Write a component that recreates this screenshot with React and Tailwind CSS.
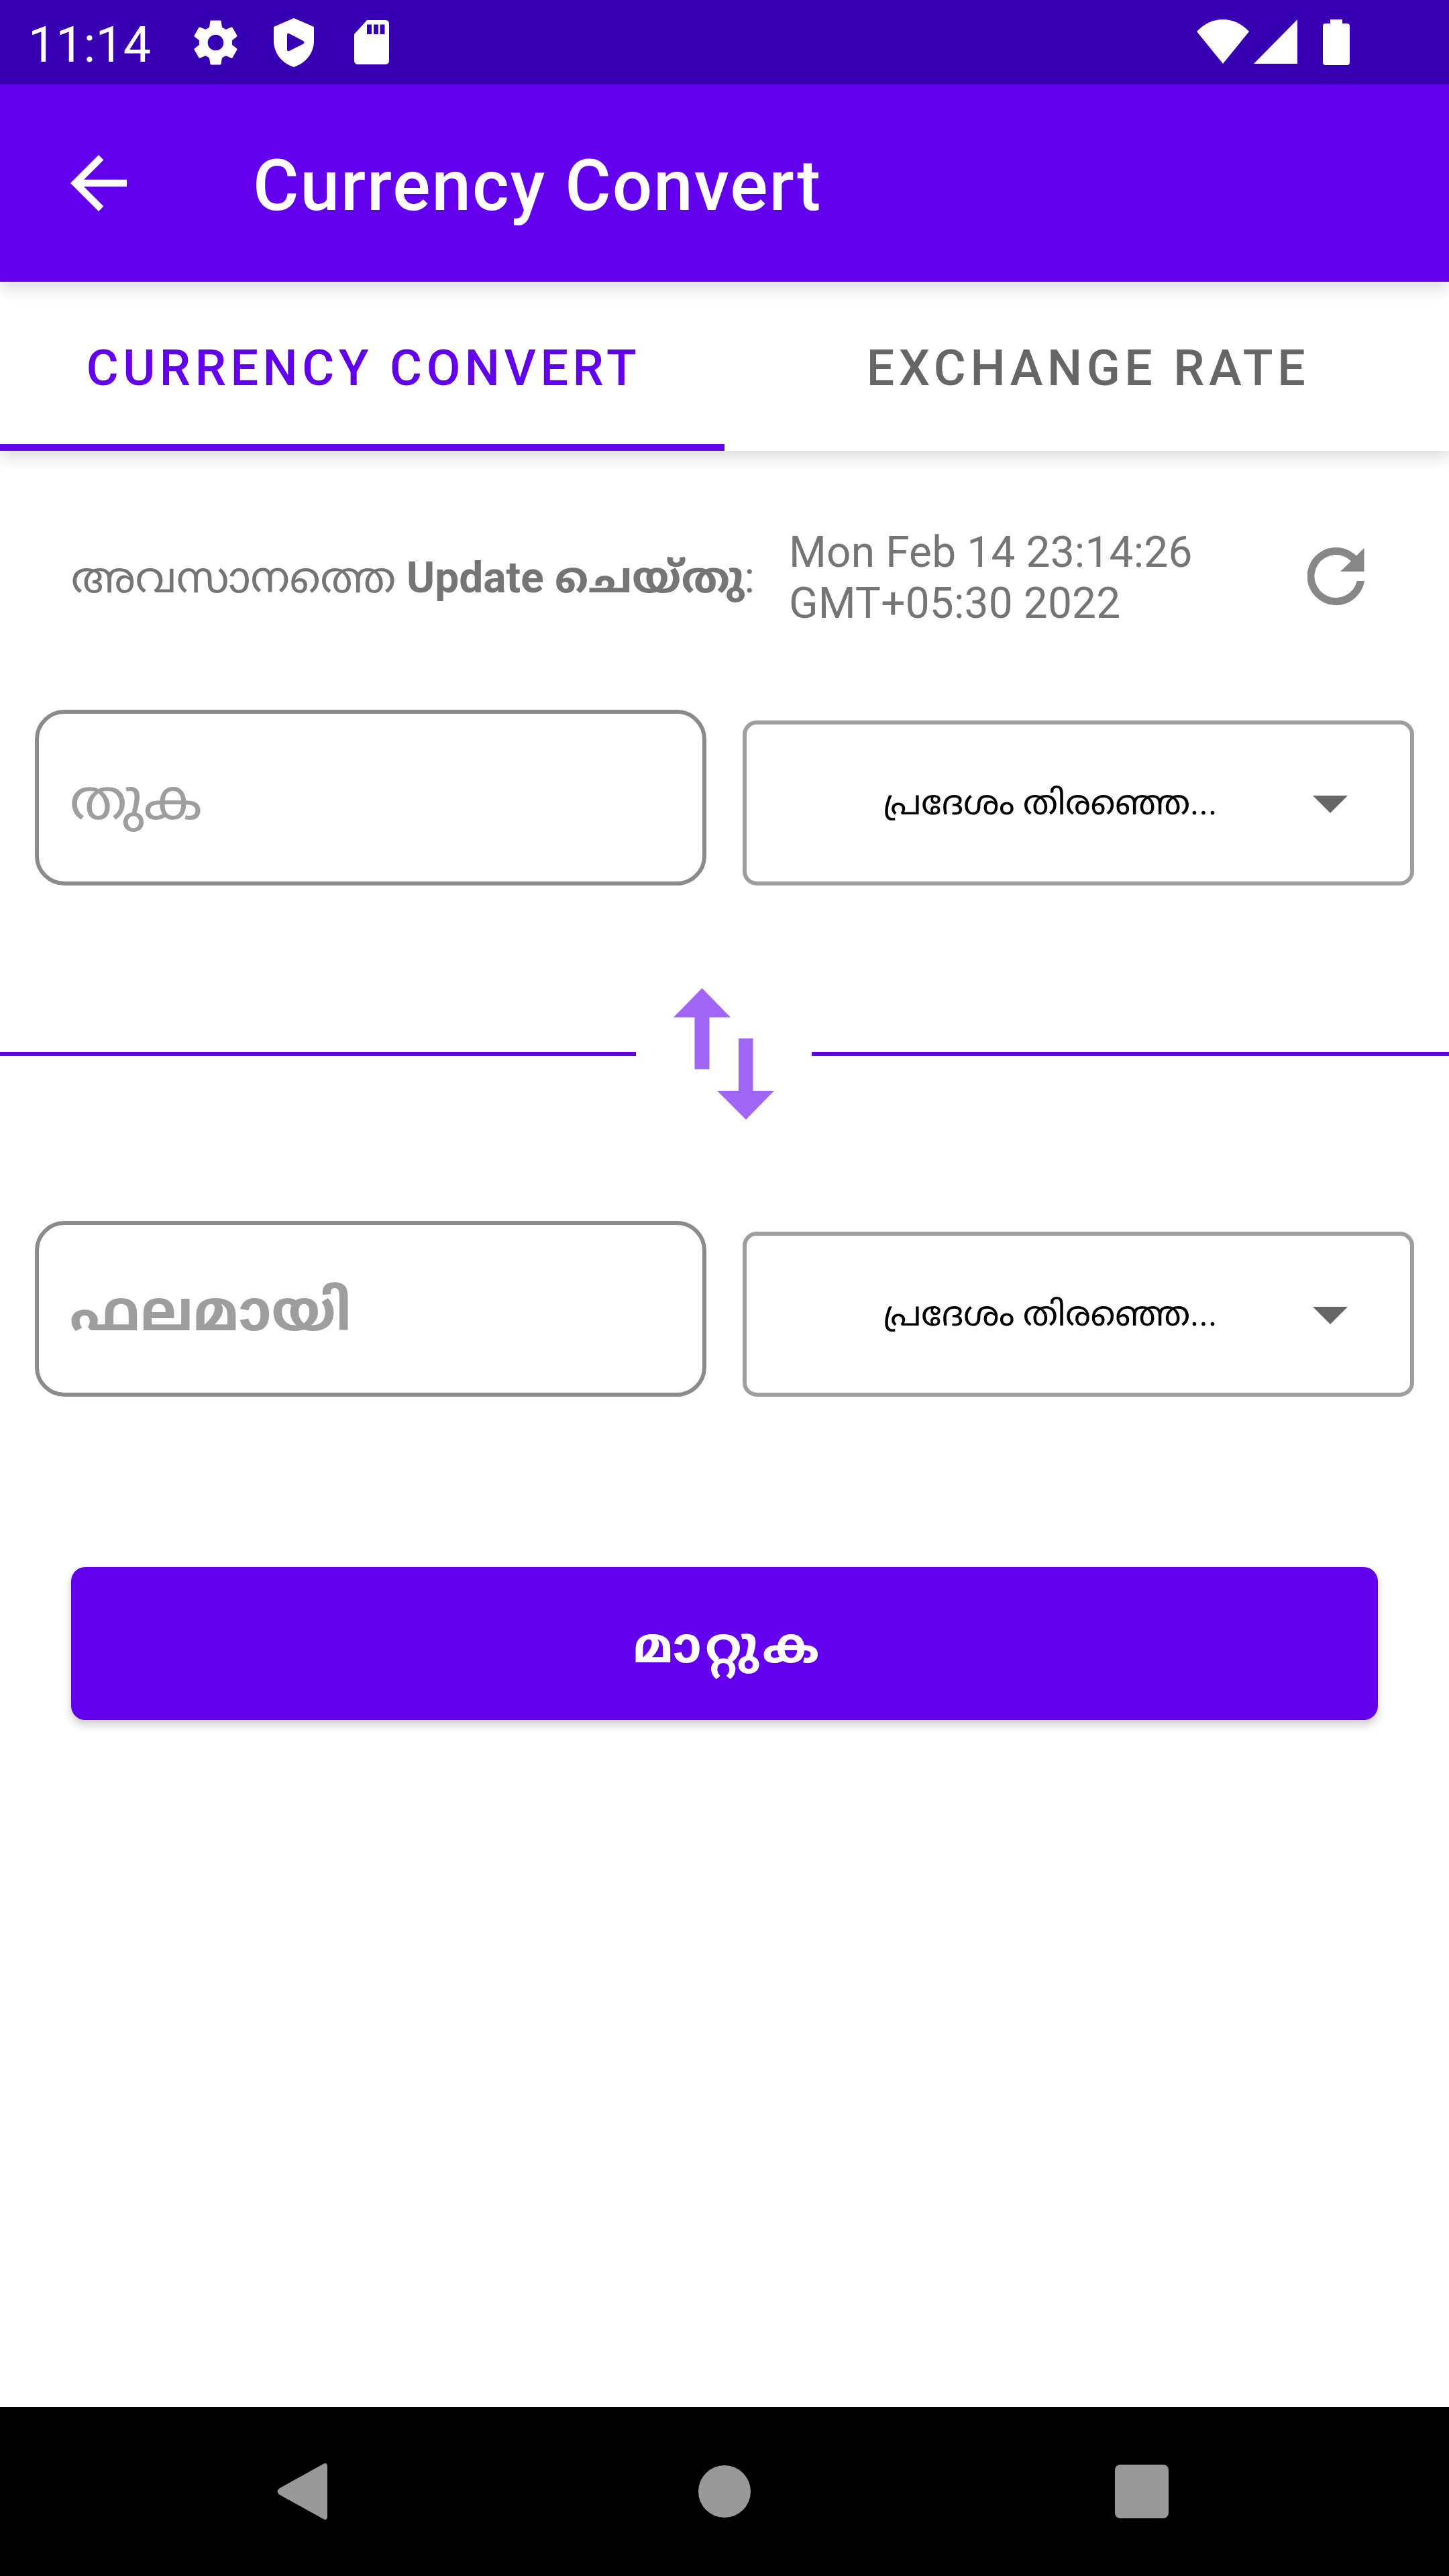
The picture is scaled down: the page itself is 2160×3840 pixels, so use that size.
function StatusBar() {
  return (
    <header className="flex h-[126px] shrink-0 items-center justify-between bg-[#3700b3] pr-[148px] pl-[42px] text-white">
      <div className="flex items-center">
        <span className="w-[240px] pt-[8px] text-[73.5px] leading-[80px]">11:14</span>
        <svg className="size-[79px]" viewBox="0 0 24 24" fill="currentColor">
          <path d="M19.43 12.98c.04-.32.07-.64.07-.98s-.03-.66-.07-.98l2.11-1.65c.19-.15.24-.42.12-.64l-2-3.46c-.12-.22-.39-.3-.61-.22l-2.49 1c-.52-.4-1.08-.73-1.69-.98l-.38-2.65C14.46 2.18 14.25 2 14 2h-4c-.25 0-.46.18-.49.42l-.38 2.65c-.61.25-1.17.59-1.69.98l-2.49-1c-.23-.09-.49 0-.61.22l-2 3.46c-.13.22-.07.49.12.64l2.11 1.65c-.04.32-.07.65-.07.98s.03.66.07.98l-2.11 1.65c-.19.15-.24.42-.12.64l2 3.46c.12.22.39.3.61.22l2.49-1c.52.4 1.08.73 1.69.98l.38 2.65c.03.24.24.42.49.42h4c.25 0 .46-.18.49-.42l.38-2.65c.61-.25 1.17-.59 1.69-.98l2.49 1c.23.09.49 0 .61-.22l2-3.46c.12-.22.07-.49-.12-.64l-2.11-1.65zM12 15.6c-2 0-3.6-1.6-3.6-3.6s1.6-3.6 3.6-3.6 3.6 1.6 3.6 3.6-1.6 3.6-3.6 3.6z" />
        </svg>
        <svg className="ml-[47px] h-[73px] w-[60px]" viewBox="0 0 60 73" fill="currentColor" fillRule="evenodd">
          <path d="M30 0 60 13V34C60 52 48 67 30 73 12 67 0 52 0 34V13ZM20 25V47C20 49.500 22 50 24 48.600L44 38.500C46 37.300 46 35.300 44 34L24 23.400C22 22.300 20 22.800 20 25Z" />
        </svg>
        <svg className="ml-[60px] h-[66px] w-[52px]" viewBox="0 0 52 66" fill="currentColor" fillRule="evenodd">
          <path d="M19 0H47Q52 0 52 6V60Q52 66 46 66H6Q0 66 0 60V21ZM19 6.500V21H26V6.500ZM29 6.500V21H36V6.500ZM38.500 6.500V21H45.500V6.500Z" />
        </svg>
      </div>
      <div className="flex items-start">
        <svg className="h-[66px] w-[78px]" viewBox="0 0 78 66" fill="currentColor">
          <path d="M0 18Q17 0 39 0T78 18L39 66Z" />
        </svg>
        <svg className="ml-[7px] h-[66px] w-[65px]" viewBox="0 0 65 66" fill="currentColor">
          <path d="M65 0V66H0Z" />
        </svg>
        <svg className="ml-[38px] h-[68px] w-[40px]" viewBox="0 0 40 68" fill="currentColor">
          <path d="M11 0H29V6H36Q40 6 40 10V64Q40 68 36 68H4Q0 68 0 64V10Q0 6 4 6H11Z" />
        </svg>
      </div>
    </header>
  );
}

function AppBar() {
  return (
    <div className="z-20 flex h-[294px] shrink-0 items-center bg-[#6200ee] pl-[84px] text-white shadow-[0_10px_22px_rgba(0,0,0,0.14)]">
      <svg className="size-[126px]" viewBox="0 0 24 24" fill="currentColor">
        <path d="M20 11H7.830l5.590-5.590L12 4l-8 8 8 8 1.410-1.410L7.830 13H20v-2z" />
      </svg>
      <h1 className="mt-[10px] ml-[167px] text-[105px] leading-[124px] font-medium tracking-[2px]">Currency Convert</h1>
    </div>
  );
}

function Tabs() {
  return (
    <nav className="z-10 flex h-[252px] shrink-0 bg-white text-[73.5px] leading-[86px] font-medium tracking-[0.0892em] shadow-[0_10px_22px_rgba(0,0,0,0.14)]">
      <div className="flex w-1/2 items-center justify-center border-b-[10px] border-[#6200ee] pt-[16px] pl-[4px] text-[#6200ee]">CURRENCY CONVERT</div>
      <div className="flex w-1/2 items-center justify-center pt-[6px] pl-[4px] text-[#666666]">EXCHANGE RATE</div>
    </nav>
  );
}

function Field({ hint, bold }) {
  return (
    <div className="flex h-[262px] w-[1001px] items-center rounded-[44px] border-[6px] border-[#8b8b8d] pt-[8px] pl-[46px] text-[84px] leading-[120px] text-[#9e9e9e]">
      <span className={bold ? "font-bold" : ""}>{hint}</span>
    </div>
  );
}

function Select() {
  return (
    <div className="flex h-[246px] w-[1001px] items-center rounded-[21px] border-[6px] border-[#9e9e9e] pl-[204px] text-[51px] leading-[80px] text-black">
      <span className="w-[640px] whitespace-nowrap">പ്രദേശം തിരഞ്ഞെ...</span>
      <svg className="mt-[3px] h-[26px] w-[52px]" viewBox="0 0 52 26" fill="#666666">
        <path d="M0 0H52L26 26Z" />
      </svg>
    </div>
  );
}

function Row({ hint, bold }) {
  return (
    <div className="flex items-end justify-between pr-[52px] pl-[52px]">
      <Field hint={hint} bold={bold} />
      <Select />
    </div>
  );
}

function NavBar() {
  return (
    <footer className="flex h-[252px] shrink-0 items-center bg-black pl-[413px] text-[#999999]">
      <svg className="h-[84px] w-[75px]" viewBox="0 0 75 84" fill="currentColor">
        <path d="M69 1Q75 -2 75 5V79Q75 86 69 83L4 47Q-3 42 4 37Z" />
      </svg>
      <div className="ml-[553px] size-[78px] rounded-full bg-[#999999]" />
      <div className="ml-[543px] size-[80px] rounded-[8px] bg-[#999999]" />
    </footer>
  );
}

export default function App() {
  return (
    <div className="flex h-[3840px] w-[2160px] flex-col overflow-hidden bg-white font-['Roboto','Noto_Sans_Malayalam_UI','Noto_Sans_Malayalam',sans-serif]">
      <StatusBar />
      <AppBar />
      <Tabs />
      <main className="flex grow flex-col">
        <div className="mt-[114px] flex h-[152px] items-center pl-[106px] text-[64px] leading-[76px] text-[#757575]">
          <p className="w-[1070px] whitespace-nowrap">
            അവസാനത്തെ <b>Update ചെയ്‌തു</b>:
          </p>
          <p className="w-[773px] tracking-[0.15px]">
            Mon Feb 14 23:14:26
            <br />
            GMT+05:30 2022
          </p>
          <svg className="-mt-[6px] h-[86px] w-[85px]" viewBox="0 0 85 86" fill="#878787">
            <path d="M72.900 12.600A43 43 0 1 0 85 50H73.700A32 32 0 1 1 65.100 20.400L49 36H84.500V1Z" />
          </svg>
        </div>
        <div className="mt-[120px]">
          <Row hint="തുക" />
        </div>
        <div className="mt-[152px] flex h-[197px] items-center">
          <div className="h-[6px] w-[948px] bg-[#6200ee]" />
          <svg className="mx-[56px] h-[197px] w-[150px]" viewBox="0 0 150 197" fill="#a166f6">
            <path d="M42.500 1 85 44.500H53.500V122H31.500V44.500H0Z" />
            <path d="M97 76H118.500V154H150L108 197 65 154H97Z" />
          </svg>
          <div className="h-[6px] w-[950px] bg-[#6200ee]" />
        </div>
        <div className="mt-[151px]">
          <Row hint="ഫലമായി" bold />
        </div>
        <button className="mt-[254px] ml-[106px] flex h-[228px] w-[1948px] items-center justify-center rounded-[21px] bg-[#6200ee] pt-[6px] pl-[10px] text-[73.5px] leading-[100px] font-bold tracking-[5.5px] text-white shadow-[0_8px_14px_rgba(0,0,0,0.18),0_0_6px_rgba(0,0,0,0.08)]">
          മാറ്റുക
        </button>
      </main>
      <NavBar />
    </div>
  );
}
